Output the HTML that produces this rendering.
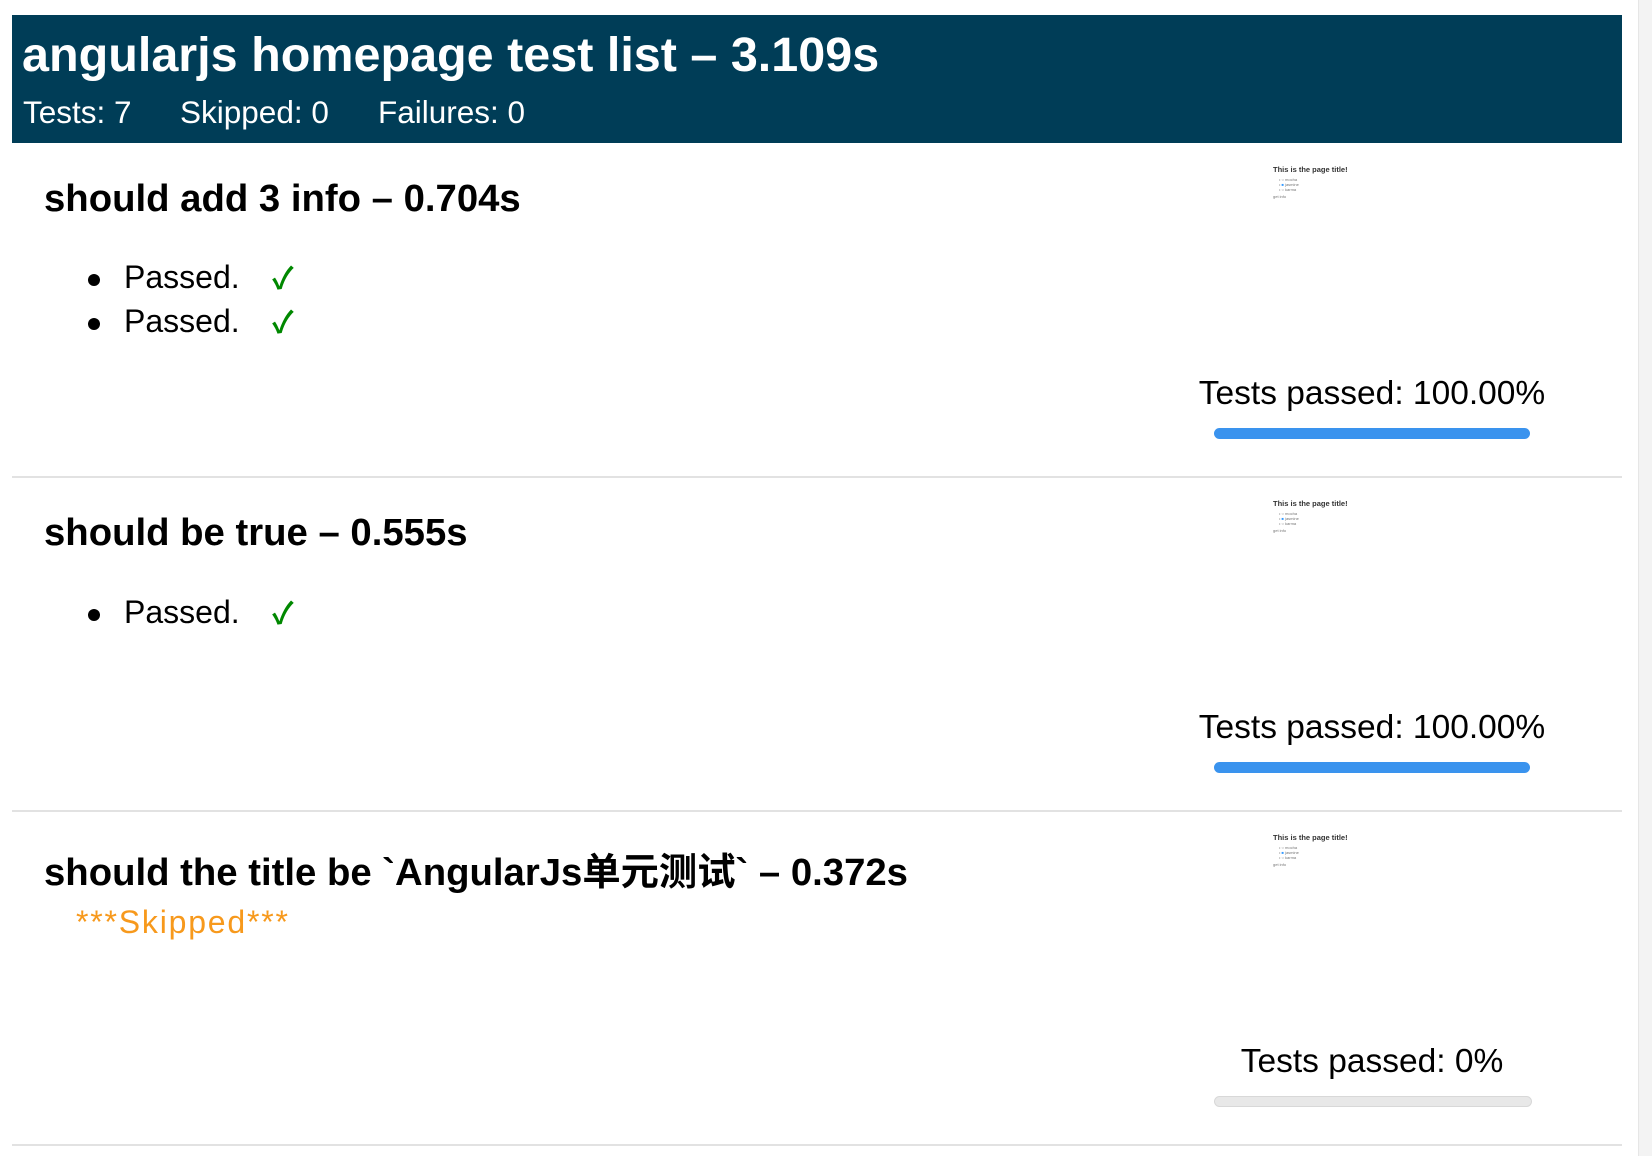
<!DOCTYPE html>
<html><head><meta charset="utf-8"><style>
body{margin:0;width:1652px;height:1156px;background:#fff;position:relative;overflow:hidden;font-family:"Liberation Sans","Noto Sans CJK SC",sans-serif;color:#000}
.a{position:absolute;white-space:nowrap}
.hdr{left:12px;top:15px;width:1610px;height:128px;background:#003d57}
.t{left:22px;top:27px;font-size:48.5px;font-weight:bold;color:#fff}
.s{top:94px;font-size:31.5px;color:#fff}
h2{position:absolute;margin:0;left:44px;font-size:38.3px;font-weight:bold;white-space:nowrap}
.li{position:absolute;left:124px;font-size:32px}
.dot{position:absolute;left:88px;width:12px;height:12px;border-radius:50%;background:#000}
.ck{position:absolute;left:272px;font-size:30px;color:#080;font-weight:bold}
.tp{position:absolute;left:1180px;width:384px;text-align:center;font-size:33.5px}
.bar{position:absolute;left:1214px;width:316px;height:11px;border-radius:6px;background:#3a93ee}
.bar.e{background:#e8e8e8;border:1px solid #d8d8d8;height:9px}
.sep{position:absolute;left:12px;width:1610px;height:2px;background:#e2e2e2}
.th{position:absolute;left:1273px;font-size:7px;color:#333}
.th b{display:block;font-size:7.5px;margin-bottom:3px}
.th i{display:block;font-style:normal;font-size:4px;line-height:5px;margin-left:6px;color:#777}
.sb{position:absolute;left:1638px;top:0;width:14px;height:1156px;background:#f3f3f3;border-left:1px solid #e6e6e6}
</style></head><body>
<div class="a hdr"></div>
<div class="a t">angularjs homepage test list – 3.109s</div>
<div class="a s" style="left:23px">Tests: 7</div>
<div class="a s" style="left:180px">Skipped: 0</div>
<div class="a s" style="left:378px">Failures: 0</div>

<h2 style="top:177px">should add 3 info – 0.704s</h2>
<div class="dot" style="top:274px"></div><div class="li" style="top:259px">Passed.</div><div class="ck" style="top:254px">✓</div>
<div class="dot" style="top:318px"></div><div class="li" style="top:303px">Passed.</div><div class="ck" style="top:298px">✓</div>
<div class="th" style="top:165px"><b>This is the page title!</b><i>• ○ mocha</i><i>• <span style="color:#39f">■</span> jasmine</i><i>• ○ karma</i><i style="margin:2px 0 0">get info</i></div>
<div class="tp" style="top:375px">Tests passed: 100.00%</div>
<div class="bar" style="top:428px"></div>
<div class="sep" style="top:476px"></div>

<h2 style="top:511px">should be true – 0.555s</h2>
<div class="dot" style="top:609px"></div><div class="li" style="top:594px">Passed.</div><div class="ck" style="top:589px">✓</div>
<div class="th" style="top:499px"><b>This is the page title!</b><i>• ○ mocha</i><i>• <span style="color:#39f">■</span> jasmine</i><i>• ○ karma</i><i style="margin:2px 0 0">get info</i></div>
<div class="tp" style="top:709px">Tests passed: 100.00%</div>
<div class="bar" style="top:762px"></div>
<div class="sep" style="top:810px"></div>

<h2 style="top:842px">should the title be `AngularJs单元测试` – 0.372s</h2>
<div class="li" style="left:76px;top:904px;color:#f7991c;letter-spacing:1.8px">***Skipped***</div>
<div class="th" style="top:833px"><b>This is the page title!</b><i>• ○ mocha</i><i>• <span style="color:#39f">■</span> jasmine</i><i>• ○ karma</i><i style="margin:2px 0 0">get info</i></div>
<div class="tp" style="top:1043px">Tests passed: 0%</div>
<div class="bar e" style="top:1096px"></div>
<div class="sep" style="top:1144px"></div>
<div class="sb"></div>
</body></html>
